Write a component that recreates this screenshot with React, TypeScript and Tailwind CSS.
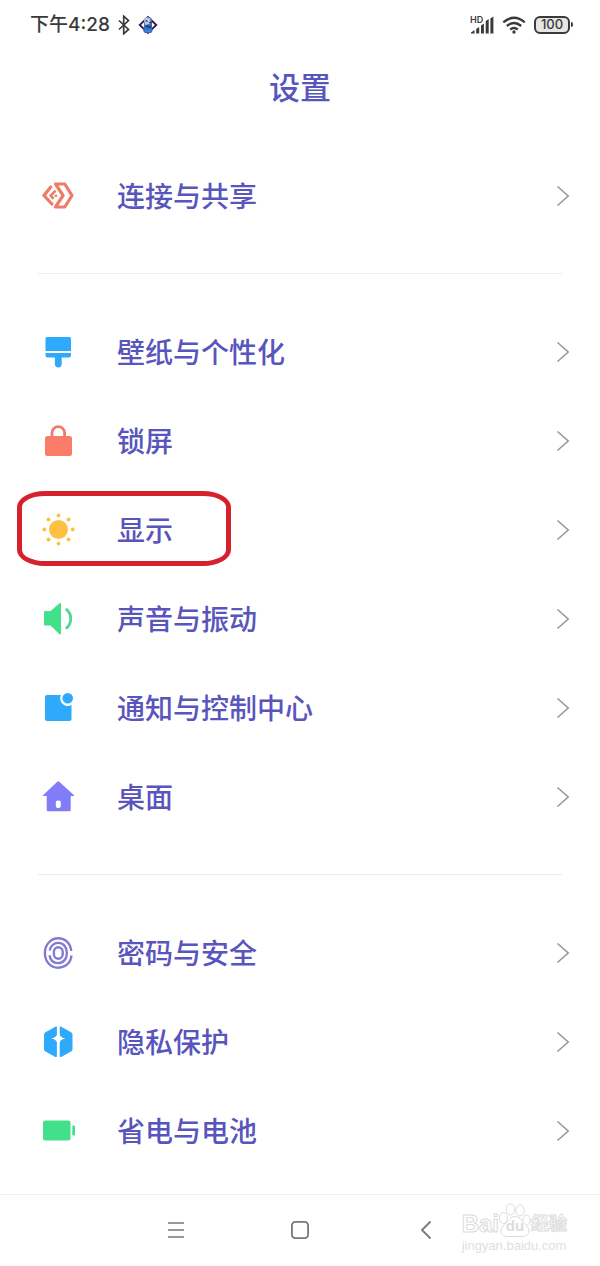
import React from 'react';

const icons = {
  connect: (
    <g fill="none" stroke="#ec7d66" strokeWidth="3.2">
      <path d="M15.5 6h9.3L32 17.5 24.8 29h-9.3l7.6-11.5z" strokeLinejoin="round" />
      <path d="M11.5 8 4 17.5l8.8 9.5" />
      <path d="M15.6 12.6l-4.9 4.9 2.8 3.4" strokeWidth="2.6" />
      <path d="M14.6 17.8h2.4" strokeWidth="2.2" />
    </g>
  ),
  brush: (
    <g fill="#2fa9fb">
      <path d="M7 3h22.5A1.5 1.5 0 0 1 31 4.5V17H5.5V4.5A1.5 1.5 0 0 1 7 3z" />
      <path d="M5.5 19H31v2.5a2 2 0 0 1-2 2h-7.3V30a3.4 3.4 0 0 1-6.8 0v-6.5H7.5a2 2 0 0 1-2-2z" />
    </g>
  ),
  lock: (
    <g>
      <rect x="5" y="13" width="27" height="20" rx="2.5" fill="#fa7b68" />
      <path d="M12 14v-4a6.3 6.3 0 0 1 12.6 0v4" fill="none" stroke="#f07a68" strokeWidth="2.8" />
    </g>
  ),
  sun: (
    <g fill="#fdc040">
      <circle cx="18.5" cy="17.5" r="9.5" />
      <circle cx="18.5" cy="3.4" r="1.9" />
      <circle cx="18.5" cy="31.6" r="1.9" />
      <circle cx="4.3" cy="17.5" r="1.9" />
      <circle cx="32.7" cy="17.5" r="1.9" />
      <circle cx="8.5" cy="7.5" r="2" />
      <circle cx="28.5" cy="7.5" r="2" />
      <circle cx="8.5" cy="27.5" r="2" />
      <circle cx="28.5" cy="27.5" r="2" />
    </g>
  ),
  sound: (
    <g>
      <path d="M5 10h5.5l9-7.8q1.5-.8 1.5.8v29.4q0 1.6-1.5.8l-9-8.7H5a1 1 0 0 1-1-1V11a1 1 0 0 1 1-1z" fill="#43e08b" />
      <path d="M25.8 7.8a12.4 12.4 0 0 1 0 19.8" fill="none" stroke="#4fd893" strokeWidth="2.8" />
    </g>
  ),
  notification: (
    <g>
      <rect x="5" y="5" width="26.5" height="26" rx="2" fill="#2fa9fb" />
      <circle cx="27.7" cy="8.5" r="7.5" fill="#fff" />
      <circle cx="27.7" cy="8.3" r="5.3" fill="#2fa9fb" />
    </g>
  ),
  home: (
    <g>
      <path d="M17.3 2.8q1-1 2 0L34 16.2q.6.9-.5.9h-2.8V31q0 1.2-1.2 1.2H8q-1.3 0-1.3-1.2V17.1H3.5q-1.1 0-.5-.9z" fill="#817df8" />
      <rect x="15.8" y="21.5" width="5" height="7.4" rx="2" fill="#fff" />
    </g>
  ),
  fingerprint: (
    <g fill="none" stroke="#837bd2" strokeWidth="2.4">
      <path d="M31.2 16C30.5 8 25 3.3 18.2 3.3S4.9 9 4.9 18s6 14.7 13.3 14.7S31 27.5 31.4 20.5" />
      <path d="M9.7 15.5c1-4.8 4.5-7.6 8.5-7.6 5 0 8.7 4 8.7 10.1s-3.9 10.1-8.7 10.1-8-3.2-8.7-7.9" />
      <rect x="13.9" y="12.3" width="8.8" height="11.4" rx="4.4" />
    </g>
  ),
  privacy: (
    <g>
      <path d="M16.9 3.5V32q0 1.6-1.5.9l-9.9-5.4Q4 26.7 4 25.2V10.5q0-1.4 1.4-2.2l10-5.5q1.5-.7 1.5.7zM19.7 3.5V32q0 1.6 1.5.9l9.9-5.4q1.4-.8 1.4-2.3V10.500q0-1.4-1.4-2.2l-9.9-5.5q-1.5-.7-1.5.7z" fill="#2fa9fb" />
      <path d="M18.3 7.5q1 6 7 7.1-6 1-7 7-1-6-7-7 6-1.100 7-7.1z" fill="#fff" />
    </g>
  ),
  battery: (
    <g fill="#43e08b">
      <rect x="3" y="7.5" width="27.5" height="20" rx="2" />
      <rect x="32.3" y="12.5" width="2.7" height="10" rx="1" />
    </g>
  ),
};

type Item = { icon: keyof typeof icons; label: string; marked?: boolean };

const groups: Item[][] = [
  [{ icon: 'connect', label: '连接与共享' }],
  [
    { icon: 'brush', label: '壁纸与个性化' },
    { icon: 'lock', label: '锁屏' },
    { icon: 'sun', label: '显示', marked: true },
    { icon: 'sound', label: '声音与振动' },
    { icon: 'notification', label: '通知与控制中心' },
    { icon: 'home', label: '桌面' },
  ],
  [
    { icon: 'fingerprint', label: '密码与安全' },
    { icon: 'privacy', label: '隐私保护' },
    { icon: 'battery', label: '省电与电池' },
  ],
];

const StatusBar = () => (
  <div className="flex h-[49px] items-center justify-between pl-[30px] pr-[27px] text-[#3a3a3a]">
    <div className="flex items-center">
      <span className="pt-0.5 text-[19px] font-medium">下午4:28</span>
      <svg className="ml-1.5 h-5 w-4" viewBox="0 0 16 20" fill="none" stroke="currentColor" strokeWidth="1.7">
        <path d="M3 5.5l9.5 9-4.8 4.3V1.2l4.8 4.3-9.5 9" />
      </svg>
      <svg className="ml-1.5 h-5 w-5" viewBox="0 0 20 20">
        <path d="M10 2l8.3 8-8.3 8-8.3-8z" fill="#fff" stroke="#35184f" strokeWidth="1.8" />
        <path d="M6 4q4-4 8 0v9q1.5 3-1 5H7q-3-2-1-6z" fill="#3d68b5" />
        <path d="M6 4.5q3-3.5 6.5-.5l-.5 5-5 1z" fill="#b9cbd8" />
        <path d="M7.5 5.5l2 1M11 8l3-1M8 11l5 1" stroke="#20356f" strokeWidth="1.3" />
        <path d="M7 14q3 2 6 0v3H7z" fill="#2a8be0" />
      </svg>
    </div>
    <div className="flex items-center">
      <div className="relative h-5 w-6">
        <span className="absolute left-0 top-0 text-[9px] font-semibold leading-none">HD</span>
        <svg className="h-5 w-6" viewBox="0 0 24 20" fill="currentColor">
          <path d="M1 17.5L4.5 15v3.5H1zM6.2 14l3-2v6.5h-3zM11 10.5l2.9-2v10H11zM15.7 6l3-2v14.5h-3zM20.4 3.5l3-2v17h-3z" />
        </svg>
      </div>
      <svg className="ml-2 h-5 w-6" viewBox="0 0 24 20" fill="none" stroke="currentColor" strokeWidth="2.3">
        <path d="M1.3 7.3q10.7-9 21.4 0M4.8 11q7.2-6 14.4 0M8.2 14.5q3.8-3 7.6 0" />
        <circle cx="12" cy="17" r="1.7" fill="currentColor" stroke="none" />
      </svg>
      <div className="ml-2 flex h-[18px] w-9 items-center justify-center rounded-md border-2 border-current bg-[#e6e6e6] text-[13px] font-medium leading-none">
        100
      </div>
      <div className="ml-px h-[5px] w-0.5 rounded-r bg-current" />
    </div>
  </div>
);

const Row = ({ icon, label, marked }: Item) => (
  <a href="#" className="relative flex h-[89px] items-center pl-10 pr-[30px]">
    <svg className="h-9 w-9 shrink-0" viewBox="0 0 36 36">
      {icons[icon]}
    </svg>
    <span className="ml-[41px] flex-1 pt-0.5 text-[28px] font-medium leading-9">{label}</span>
    <svg className="h-[22px] w-[14px]" viewBox="0 0 14 22" fill="none" stroke="#999" strokeWidth="1.6">
      <path d="M1.5 1.5L12.2 11 1.5 20.5" />
    </svg>
    {marked && (
      <span className="absolute left-[17px] top-[6px] h-[75px] w-[214px] rounded-[28px/16px] border-5 border-[#d5222c]" />
    )}
  </a>
);

const Watermark = () => (
  <div className="absolute bottom-3 right-[33px] font-['Liberation_Sans','Noto_Sans_CJK_SC',sans-serif] text-white">
    <div className="flex items-end font-bold leading-none [-webkit-text-stroke:1px_#dcdcdc]">
      <span className="text-2xl leading-7">Bai</span>
      <span className="relative flex h-9 w-8 items-end justify-center">
        <svg className="absolute inset-0 h-9 w-8" viewBox="0 0 32 36" fill="#fff" stroke="#dcdcdc">
          <ellipse cx="4.5" cy="16" rx="4" ry="5.5" />
          <ellipse cx="11.5" cy="7.5" rx="4.2" ry="5.5" />
          <ellipse cx="21" cy="8.5" rx="4.2" ry="5.5" />
          <ellipse cx="27.5" cy="18" rx="3.7" ry="5" />
          <path d="M16 14.5c4.500 0 6 3.500 8.500 6s5.500 5 5.500 8.500c0 4-3.500 5.500-7 5.500H9c-3.500 0-7-1.500-7-5.500 0-3.500 3-6 5.500-8.500s4-6 8.500-6z" />
        </svg>
        <span className="relative text-[15px] leading-6 text-[#dcdcdc] [-webkit-text-stroke:0px]">du</span>
      </span>
      <span className="text-lg leading-7">经验</span>
    </div>
    <div className="text-[13px] leading-4 text-[#e0e0e0]">jingyan.baidu.com</div>
  </div>
);

const NavBar = () => (
  <nav className="relative flex h-[72px] justify-center border-t border-[#f0f0f0] pb-0.5 text-[#777]">
    <button aria-label="菜单" className="flex w-[124px] items-center justify-center">
      <svg className="h-5 w-5" viewBox="0 0 20 20" stroke="currentColor" strokeWidth="1.6">
        <path d="M2 3h16M2 10h16M2 17h16" />
      </svg>
    </button>
    <button aria-label="主页" className="flex w-[124px] items-center justify-center">
      <svg className="h-5 w-5" viewBox="0 0 20 20" fill="none" stroke="currentColor" strokeWidth="1.8">
        <rect x="1.9" y="1.9" width="16.2" height="16.2" rx="3.5" />
      </svg>
    </button>
    <button aria-label="返回" className="flex w-[124px] items-center justify-center">
      <svg className="h-5 w-5" viewBox="0 0 20 20" fill="none" stroke="currentColor" strokeWidth="1.8">
        <path d="M16.5 1.500L8 10l8.5 8.5" />
      </svg>
    </button>
    <Watermark />
  </nav>
);

export default function App() {
  return (
    <div className="flex min-h-screen flex-col bg-white font-[Inter,'Noto_Sans_CJK_SC',sans-serif] text-[#5855bd]">
      <StatusBar />
      <h1 className="pb-[42px] pt-[18px] text-center text-[31px] font-medium leading-[42px]">设置</h1>
      <main className="flex-1">
        {groups.map((group, i) => (
          <section key={i}>
            {i > 0 && <hr className="mx-[38px] my-[33px] border-[#ededed]" />}
            {group.map((item) => (
              <Row key={item.label} {...item} />
            ))}
          </section>
        ))}
      </main>
      <NavBar />
    </div>
  );
}
